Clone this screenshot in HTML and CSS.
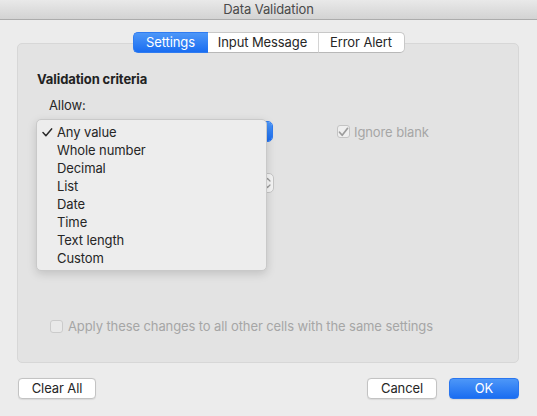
FILE: index.html
```
<!DOCTYPE html>
<html>
<head>
<meta charset="utf-8">
<link rel="stylesheet" href="styles.css">
</head>
<body>
<div class="window">
  <div class="titlebar">Data Validation</div>
  <div class="content">
    <div class="tabs">
      <div class="tab tab-settings active">Settings</div>
      <div class="tab tab-input">Input Message</div>
      <div class="tab tab-error">Error Alert</div>
    </div>
    <div class="panel">
      <div class="heading">Validation criteria</div>
      <div class="label">Allow:</div>
      <div class="row row-allow">
        <div class="popup popup-allow"><span class="cap"></span></div>
        <div class="check-wrap disabled">
          <span class="checkbox checked">
            <svg width="11" height="10" viewBox="0 0 11 10"><path d="M1.5 5.2 L4.2 8.3 L9.6 1.3" fill="none" stroke="#9c9c9c" stroke-width="1.7" stroke-linecap="round" stroke-linejoin="round"/></svg>
          </span>
          <span class="check-label">Ignore blank</span>
        </div>
      </div>
      <div class="row row-data">
        <div class="popup popup-data">
          <svg class="arrows" width="7" height="14" viewBox="0 0 7 14"><path d="M1 5 L3.5 2.5 L6 5 M1 9 L3.5 11.5 L6 9" fill="none" stroke="#9a9a9a" stroke-width="1.2" stroke-linecap="round" stroke-linejoin="round"/></svg>
        </div>
      </div>
      <div class="row row-apply disabled">
        <span class="checkbox"></span>
        <span class="check-label">Apply these changes to all other cells with the same settings</span>
      </div>
    </div>
    <div class="footer">
      <div class="btn">Clear All</div>
      <div class="footer-right">
        <div class="btn btn-cancel">Cancel</div>
        <div class="btn btn-ok">OK</div>
      </div>
    </div>
  </div>
  <div class="menu">
    <div class="item selected">
      <svg class="tick" width="11" height="9" viewBox="0 0 11 9"><path d="M1 4.6 L3.9 7.7 L9.6 0.9" fill="none" stroke="#2a2a2a" stroke-width="1.5" stroke-linecap="round" stroke-linejoin="round"/></svg>
      Any value
    </div>
    <div class="item">Whole number</div>
    <div class="item">Decimal</div>
    <div class="item">List</div>
    <div class="item">Date</div>
    <div class="item">Time</div>
    <div class="item">Text length</div>
    <div class="item">Custom</div>
  </div>
</div>
</body>
</html>
```

FILE: styles.css
```
html, body {
  margin: 0;
  padding: 0;
}
body {
  width: 537px;
  height: 416px;
  overflow: hidden;
  background: #ececec;
  font-family: "Inter", "Liberation Sans", sans-serif;
  font-size: 13px;
  letter-spacing: -0.1px;
  color: #262626;
}
.window {
  position: relative;
  width: 537px;
  height: 416px;
  background: #ececec;
}
.titlebar {
  height: 19px;
  line-height: 19px;
  text-align: center;
  color: #4a4a4a;
  background: linear-gradient(#e9e9e9, #d3d3d3);
  border-bottom: 1px solid #acacac;
}
.content {
  padding: 12px 18px 0 17px;
}
.tabs {
  position: relative;
  z-index: 1;
  display: flex;
  justify-content: center;
  height: 21px;
  margin-left: 1px;
}
.tab {
  box-sizing: border-box;
  height: 21px;
  line-height: 19px;
  text-align: center;
  background: #fff;
  border-top: 1px solid #c8c8c8;
  border-bottom: 1px solid #b8b8b8;
  color: #262626;
}
.tab-settings {
  width: 75px;
  border-radius: 5px 0 0 5px;
  border-left: 1px solid #c8c8c8;
}
.tab-input {
  width: 111px;
  border-right: 1px solid #d4d4d4;
}
.tab-error {
  width: 86px;
  border-right: 1px solid #c8c8c8;
  border-radius: 0 5px 5px 0;
}
.tab.active {
  color: #fff;
  background: linear-gradient(#4d97f8, #1a6df1);
  border-color: #2f7bf0;
}
.panel {
  box-sizing: border-box;
  height: 320px;
  margin-top: -10px;
  padding: 27px 0 0 19px;
  background: #e3e3e3;
  border: 1px solid #d7d7d7;
  border-radius: 5px;
}
.heading {
  font-weight: 700;
  line-height: 16px;
  color: #222;
}
.label {
  line-height: 16px;
  margin-top: 10px;
  margin-left: 12px;
  color: #262626;
}
.row {
  display: flex;
  align-items: center;
}
.row-allow {
  margin-top: 8px;
  margin-left: 12px;
  height: 21px;
}
.popup {
  position: relative;
  box-sizing: border-box;
  background: #fff;
  border: 1px solid #c6c6c6;
  border-radius: 5px;
}
.popup-allow {
  width: 224px;
  height: 21px;
  border-color: #2f7bf0;
  overflow: hidden;
}
.popup-allow .cap {
  position: absolute;
  right: 0;
  top: 0;
  bottom: 0;
  width: 18px;
  background: linear-gradient(#4d97f8, #1a6df1);
}
.popup-data {
  width: 225px;
  height: 20px;
  background: #f5f5f5;
}
.popup-data .arrows {
  position: absolute;
  right: 2px;
  top: 2px;
}
.check-wrap {
  display: flex;
  align-items: center;
  margin-left: 64px;
}
.checkbox {
  box-sizing: border-box;
  display: inline-flex;
  align-items: center;
  justify-content: center;
  width: 13px;
  height: 13px;
  background: #efefef;
  border: 1px solid #c4c4c4;
  border-radius: 3px;
}
.check-label {
  margin-left: 4px;
  color: #a6a6a6;
}
.row-data {
  margin-top: 31px;
  margin-left: 12px;
}
.row-apply {
  margin-top: 125px;
  margin-left: 13px;
  height: 16px;
}
.row-apply .checkbox {
  background: #e9e9e9;
  border-color: #cbcbcb;
}
.row-apply .check-label {
  margin-left: 5px;
}
.footer {
  display: flex;
  justify-content: space-between;
  margin-top: 15px;
  margin-left: 1px;
}
.footer-right {
  display: flex;
  gap: 12px;
}
.btn {
  box-sizing: border-box;
  width: 78px;
  height: 21px;
  line-height: 19px;
  text-align: center;
  background: #fff;
  border: 1px solid #c3c3c3;
  border-radius: 4px;
  box-shadow: 0 0.5px 1px rgba(0,0,0,0.08);
  color: #262626;
}
.btn-cancel {
  width: 70px;
}
.btn-ok {
  width: 70px;
  color: #fff;
  background: linear-gradient(#4d97f8, #1a6df1);
  border-color: #2a76ef;
}
.menu {
  position: absolute;
  left: 36px;
  top: 119px;
  box-sizing: border-box;
  width: 231px;
  height: 152px;
  padding: 3px 0 4px;
  background: #ededed;
  border: 1px solid #c9c9c9;
  border-radius: 5px;
  box-shadow: 0 3px 10px rgba(0,0,0,0.15);
  z-index: 2;
}
.item {
  position: relative;
  height: 18px;
  line-height: 18px;
  padding-left: 20px;
  color: #262626;
}
.tick {
  position: absolute;
  left: 5px;
  top: 5px;
}
```
